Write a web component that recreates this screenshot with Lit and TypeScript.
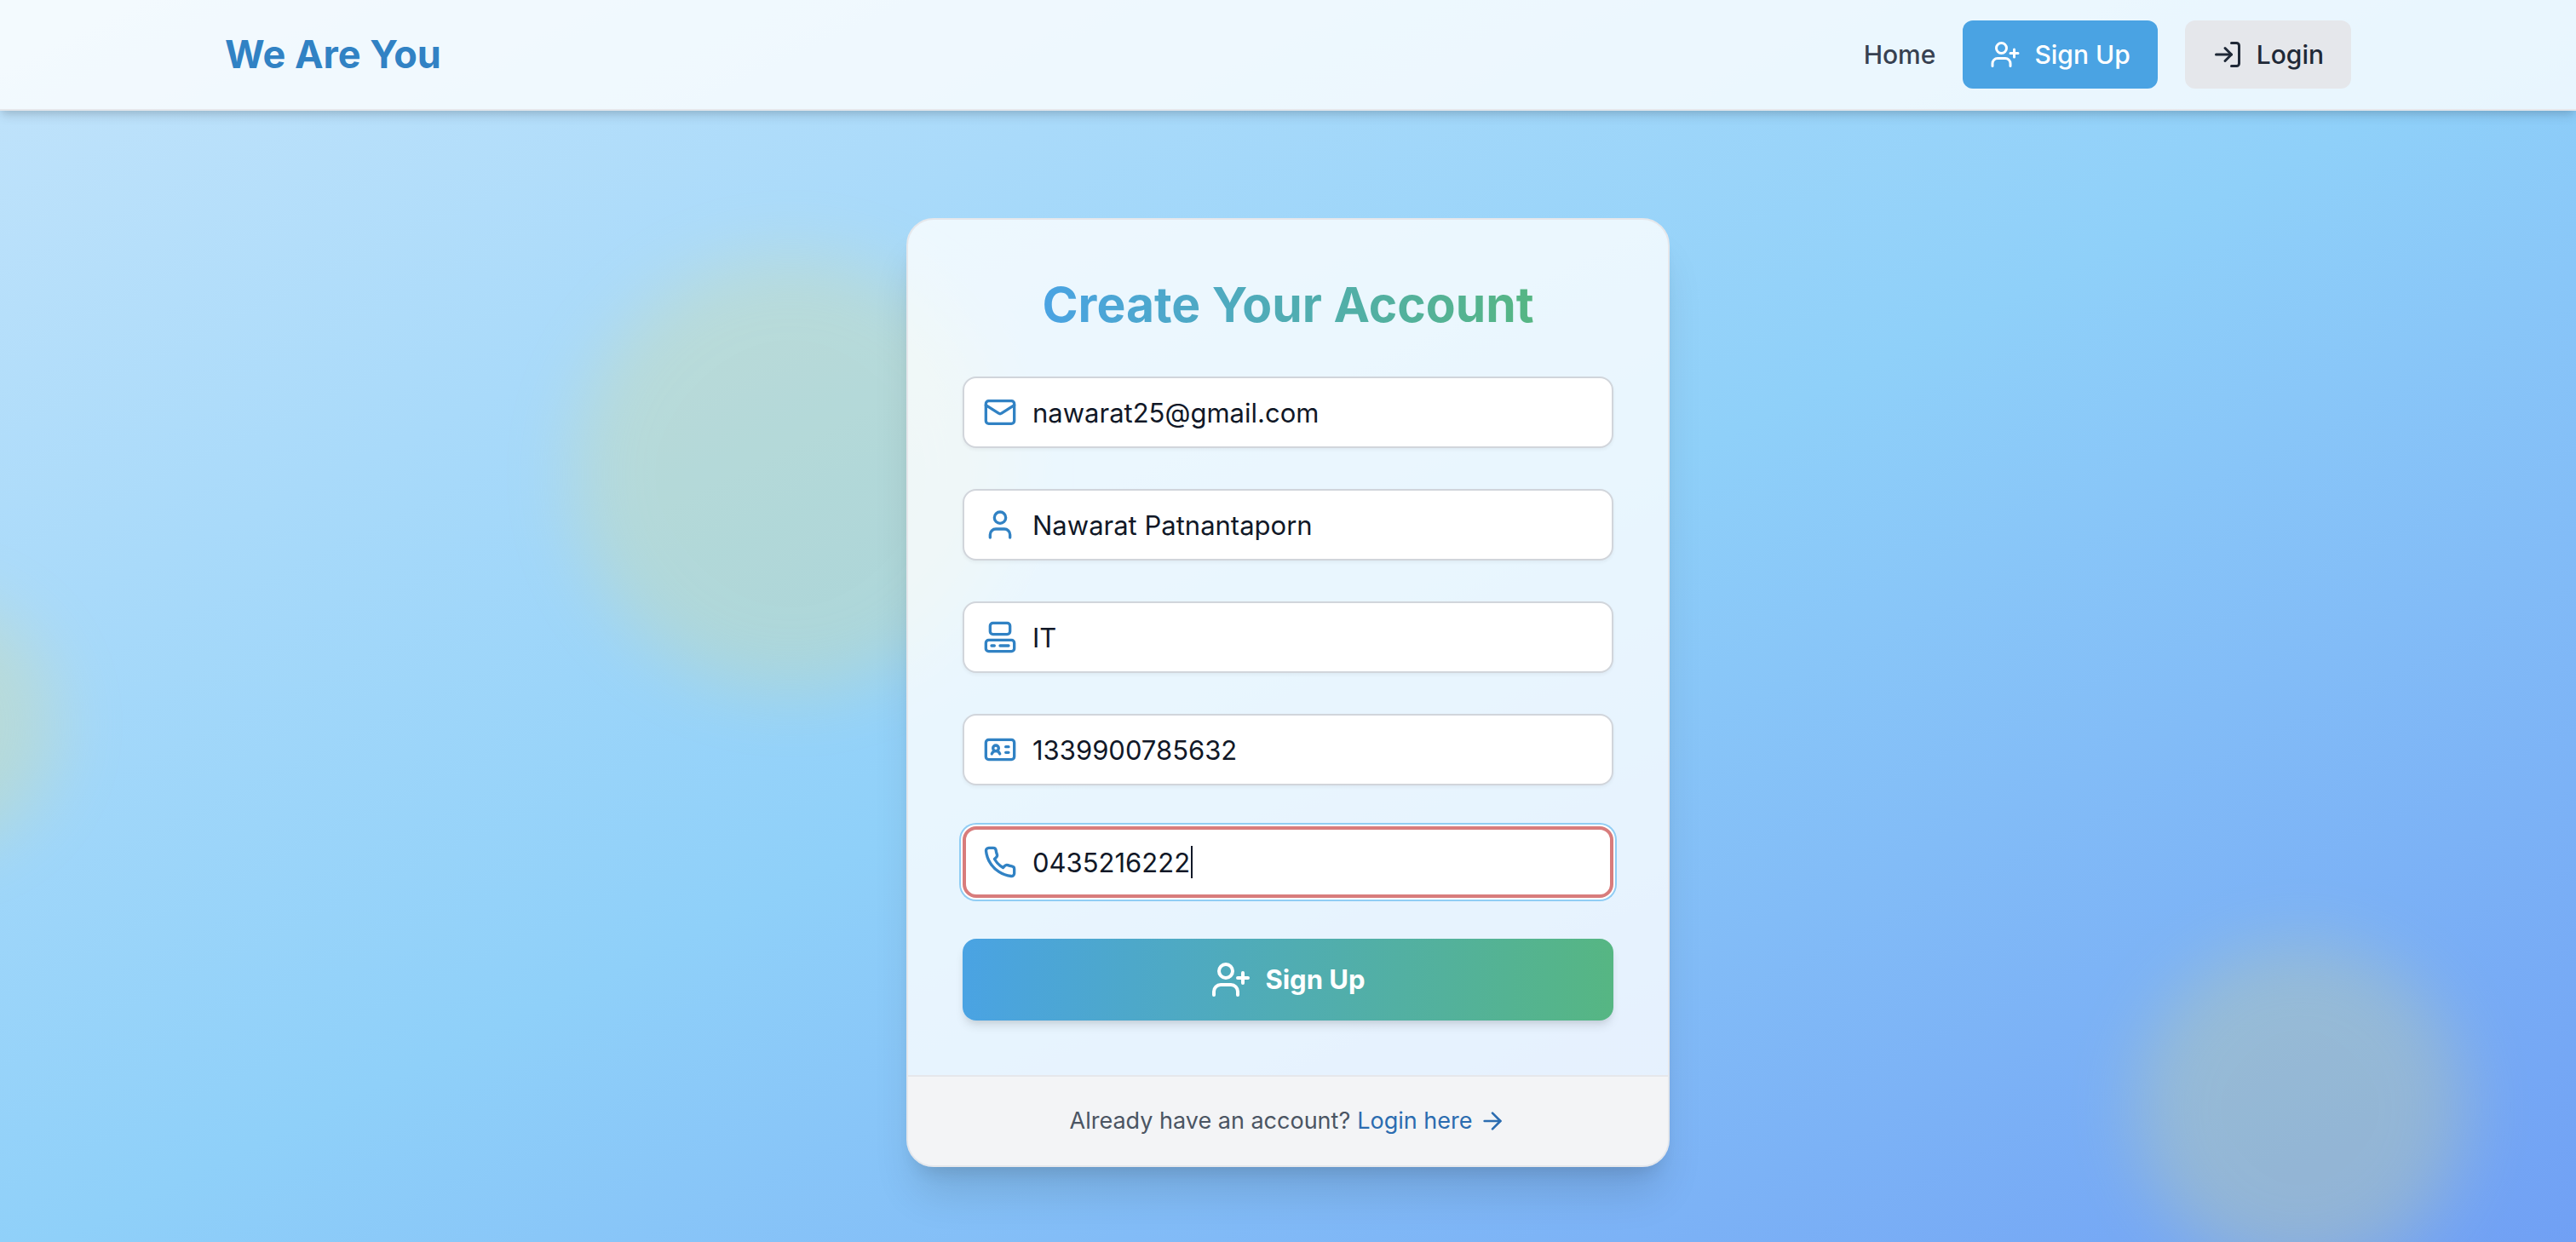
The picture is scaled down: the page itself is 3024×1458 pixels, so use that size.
import { LitElement, html, css, svg } from "lit";
import { customElement } from "lit/decorators.js";
import { classMap } from "lit/directives/class-map.js";

const icons = {
  userPlus: svg`<path d="M16 21v-2a4 4 0 0 0-4-4H6a4 4 0 0 0-4 4v2"/><circle cx="9" cy="7" r="4"/><path d="M19 8v6M22 11h-6"/>`,
  logIn: svg`<path d="M15 3h4a2 2 0 0 1 2 2v14a2 2 0 0 1-2 2h-4"/><path d="m10 17 5-5-5-5"/><path d="M15 12H3"/>`,
  mail: svg`<rect width="20" height="16" x="2" y="4" rx="2"/><path d="m22 7-8.97 5.7a1.94 1.94 0 0 1-2.06 0L2 7"/>`,
  user: svg`<path d="M19 21v-2a4 4 0 0 0-4-4H9a4 4 0 0 0-4 4v2"/><circle cx="12" cy="7" r="4"/>`,
  computer: svg`<rect width="14" height="8" x="5" y="2" rx="2"/><rect width="20" height="8" x="2" y="14" rx="2"/><path d="M6 18h2M12 18h6"/>`,
  idCard: svg`<rect width="20" height="14" x="2" y="5" rx="2"/><circle cx="9" cy="11" r="2"/><path d="M6.17 15a3 3 0 0 1 5.66 0"/><path d="M16 10h2M16 14h2"/>`,
  phone: svg`<path d="M22 16.92v3a2 2 0 0 1-2.18 2 19.79 19.79 0 0 1-8.63-3.07 19.5 19.5 0 0 1-6-6 19.79 19.79 0 0 1-3.07-8.67A2 2 0 0 1 4.11 2h3a2 2 0 0 1 2 1.72 12.84 12.84 0 0 0 .7 2.81 2 2 0 0 1-.45 2.11L8.09 9.91a16 16 0 0 0 6 6l1.27-1.27a2 2 0 0 1 2.11-.45 12.84 12.84 0 0 0 2.81.7A2 2 0 0 1 22 16.92z"/>`,
  arrowRight: svg`<path d="M5 12h14"/><path d="m12 5 7 7-7 7"/>`,
};

type IconName = keyof typeof icons;

const icon = (name: IconName, cls: string) => html`<svg
  class="icon ${cls}"
  viewBox="0 0 24 24"
  aria-hidden="true"
>${icons[name]}</svg>`;

interface Field {
  id: string;
  label: string;
  type: string;
  icon: IconName;
  value: string;
  invalid?: boolean;
}

const fields: Field[] = [
  { id: "email", label: "Email", type: "email", icon: "mail", value: "nawarat25@gmail.com" },
  { id: "name", label: "Full name", type: "text", icon: "user", value: "Nawarat Patnantaporn" },
  { id: "department", label: "Department", type: "text", icon: "computer", value: "IT" },
  { id: "citizen-id", label: "Citizen ID", type: "text", icon: "idCard", value: "1339900785632" },
  { id: "phone", label: "Phone number", type: "tel", icon: "phone", value: "0435216222", invalid: true },
];

@customElement("app-root")
export class AppRoot extends LitElement {
  static styles = css`
    :host {
      display: block;
      font-family: Inter, "Liberation Sans", sans-serif;
      font-size: 31px;
      line-height: 48px;
      color: #1a202c;
    }
    *, *::before, *::after { box-sizing: border-box; }
    .page {
      position: relative;
      isolation: isolate;
      display: flex;
      flex-direction: column;
      min-height: 100vh;
      overflow: hidden;
      background: linear-gradient(to bottom right, #c3e4fb 0%, #8fd0f9 51%, #6f9ef4 102%);
    }
    .icon {
      flex: none;
      fill: none;
      stroke: currentColor;
      stroke-width: 2;
      stroke-linecap: round;
      stroke-linejoin: round;
    }
    .icon-sm { width: 32px; height: 32px; }
    .icon-md { width: 36px; height: 36px; }
    .icon-lg { width: 40px; height: 40px; }
    .icon-xl { width: 48px; height: 48px; }

    .blob {
      position: absolute;
      z-index: -1;
      border-radius: 50%;
      background: #ecdf7a;
      opacity: 0.25;
      filter: blur(40px);
    }
    .blob-top { left: 672px; top: 300px; width: 512px; height: 512px; }
    .blob-left { left: -232px; top: 700px; width: 300px; height: 300px; }
    .blob-right { left: 2508px; top: 1108px; width: 384px; height: 384px; }

    .navbar {
      background: rgba(255, 255, 255, 0.8);
      border-bottom: 2px solid #e5e7eb;
      box-shadow: 0 8px 12px -2px rgba(0, 0, 0, 0.12), 0 4px 8px -2px rgba(0, 0, 0, 0.08);
    }
    .navbar-inner {
      display: flex;
      align-items: center;
      justify-content: space-between;
      max-width: 2560px;
      margin: 0 auto;
      padding: 24px 32px;
    }
    .brand {
      font-size: 45px;
      line-height: 64px;
      font-weight: 700;
      color: #3182c4;
      text-decoration: none;
    }
    .links { display: flex; align-items: center; gap: 32px; font-size: 30px; }
    .link {
      display: flex;
      align-items: center;
      gap: 16px;
      font-weight: 500;
      color: #374151;
      text-decoration: none;
    }
    .button { padding: 16px 32px; border-radius: 12px; }
    .button-primary { background: #4aa3e3; color: #fff; }
    .button-muted { background: #e5e7eb; color: #1f2937; }

    .main { flex: 1; display: flex; align-items: flex-start; justify-content: center; padding: 126px 32px 64px; }
    .card {
      width: 100%;
      max-width: 896px;
      overflow: hidden;
      border: 2px solid #e5e7eb;
      border-radius: 32px;
      background: rgba(255, 255, 255, 0.8);
      box-shadow: 0 40px 50px -10px rgba(0, 0, 0, 0.12), 0 16px 20px -12px rgba(0, 0, 0, 0.12);
    }
    .form { display: flex; flex-direction: column; gap: 48px; padding: 64px; }
    .title {
      align-self: center;
      margin: 0;
      font-size: 57px;
      line-height: 72px;
      font-weight: 700;
      color: transparent;
      background: linear-gradient(90deg, #4aa3e3, #56b683);
      background-clip: text;
      -webkit-background-clip: text;
    }
    .field { position: relative; color: #3182c4; }
    .field .icon { position: absolute; left: 24px; top: 22px; }
    .input {
      display: block;
      width: 100%;
      height: 84px;
      margin: 0;
      padding: 0 32px 0 80px;
      border: 2px solid #d1d5db;
      border-radius: 16px;
      outline: none;
      background: #fff;
      box-shadow: 0 2px 4px rgba(0, 0, 0, 0.05);
      font: inherit;
      color: #111827;
    }
    .input.invalid {
      padding-left: 78px;
      border: 4px solid #d87c7c;
      box-shadow: 0 0 0 2px #fff, 0 0 0 4px #90cdf4;
    }
    .caret { position: absolute; left: 268px; top: 23px; width: 2px; height: 38px; background: #111827; }
    .submit {
      display: flex;
      align-items: center;
      justify-content: center;
      gap: 16px;
      width: 100%;
      padding: 24px 32px;
      border: 0;
      border-radius: 16px;
      background: linear-gradient(90deg, #4aa3e3, #56b683);
      box-shadow: 0 8px 12px -2px rgba(0, 0, 0, 0.1), 0 4px 8px -4px rgba(0, 0, 0, 0.1);
      font: inherit;
      font-weight: 700;
      color: #fff;
    }
    .card-footer {
      display: flex;
      align-items: center;
      justify-content: center;
      gap: 8px;
      padding: 32px;
      border-top: 2px solid #e5e7eb;
      background: #f3f4f6;
      font-size: 27px;
      line-height: 40px;
      color: #4b5563;
    }
    .login-link { display: flex; align-items: center; gap: 8px; color: #2b6cb0; text-decoration: none; }
  `;

  private renderField(field: Field) {
    return html`
      <div class="field">
        <input
          class=${classMap({ input: true, invalid: !!field.invalid })}
          id=${field.id}
          type=${field.type}
          aria-label=${field.label}
          .value=${field.value}
        />
        ${icon(field.icon, "icon-lg")}
        ${field.invalid ? html`<span class="caret"></span>` : null}
      </div>
    `;
  }

  render() {
    return html`
      <div class="page">
        <div class="blob blob-top"></div>
        <div class="blob blob-left"></div>
        <div class="blob blob-right"></div>
        <header class="navbar">
          <nav class="navbar-inner">
            <a class="brand" href="#">We Are You</a>
            <div class="links">
              <a class="link" href="#">Home</a>
              <a class="link button button-primary" href="#signup">${icon("userPlus", "icon-md")}Sign Up</a>
              <a class="link button button-muted" href="#login">${icon("logIn", "icon-md")}Login</a>
            </div>
          </nav>
        </header>
        <main class="main">
          <section class="card">
            <form class="form" @submit=${(e: Event) => e.preventDefault()}>
              <h1 class="title">Create Your Account</h1>
              ${fields.map((f) => this.renderField(f))}
              <button class="submit" type="submit">${icon("userPlus", "icon-xl")}Sign Up</button>
            </form>
            <div class="card-footer">
              <span>Already have an account?</span>
              <a class="login-link" href="#login">Login here ${icon("arrowRight", "icon-sm")}</a>
            </div>
          </section>
        </main>
      </div>
    `;
  }
}
